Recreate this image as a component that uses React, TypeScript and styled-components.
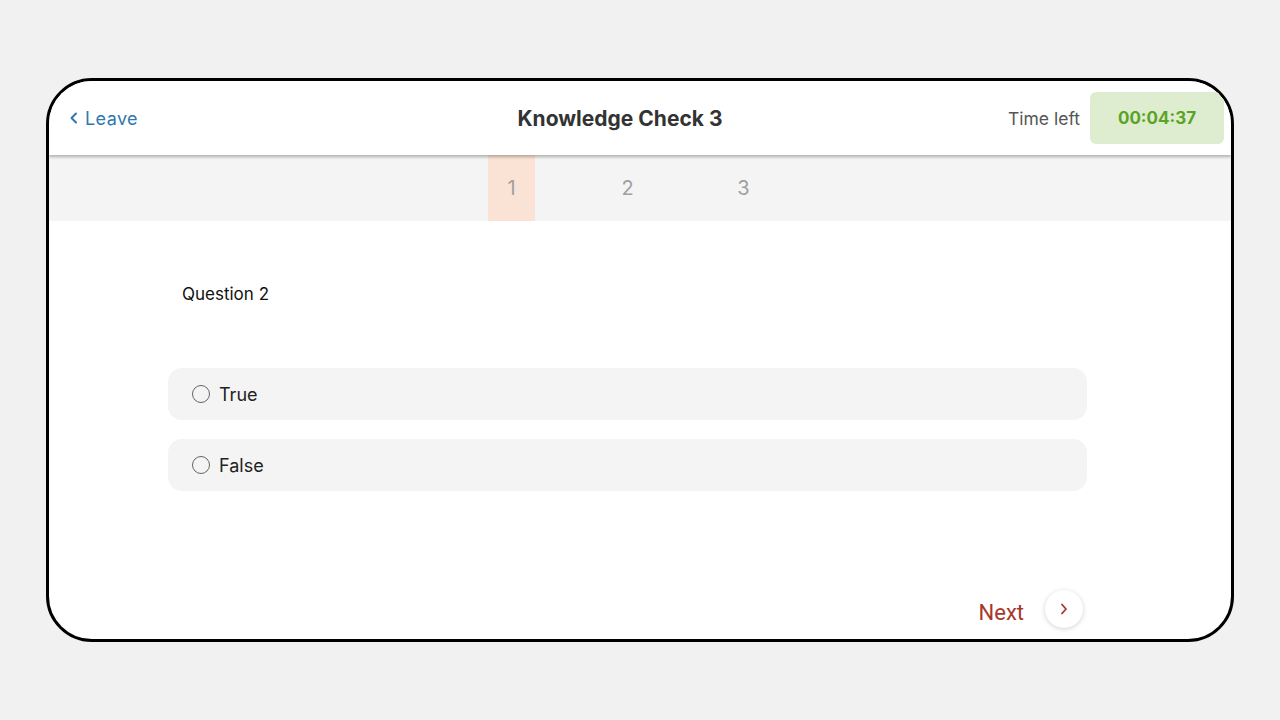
import React, { useState } from 'react'
import styled, { createGlobalStyle } from 'styled-components'

const GlobalStyle = createGlobalStyle`
  html, body {
    margin: 0;
    padding: 0;
    background: #f1f1f1;
    font-family: Inter, "Noto Sans", sans-serif;
  }
`

const questions = [1, 2, 3]
const options = ['True', 'False']

const App: React.FC = () => {
  const [current] = useState(1)
  const [selected, setSelected] = useState<string | null>(null)

  return (
    <>
      <GlobalStyle />
      <StyledPage>
        <StyledFrame>
          <StyledHeader>
            <StyledLeave>
              <svg width="10" height="12" viewBox="0 0 10 12">
                <path d="M7 1.5 L2.5 6 L7 10.5" fill="none" stroke="#2f78ad" strokeWidth="2" strokeLinecap="round" strokeLinejoin="round" />
              </svg>
              Leave
            </StyledLeave>
            <StyledTitle>Knowledge Check 3</StyledTitle>
            <StyledTimer>
              <StyledTimeLabel>Time left</StyledTimeLabel>
              <StyledTimeBadge>00:04:37</StyledTimeBadge>
            </StyledTimer>
          </StyledHeader>

          <StyledTabs>
            {questions.map((n) => (
              <StyledTab key={n} active={n === current}>{n}</StyledTab>
            ))}
          </StyledTabs>

          <StyledContent>
            <StyledQuestion>Question 2</StyledQuestion>
            <StyledOptions>
              {options.map((o) => (
                <StyledOption key={o} onClick={() => setSelected(o)}>
                  <StyledRadio checked={selected === o} />
                  {o}
                </StyledOption>
              ))}
            </StyledOptions>
          </StyledContent>

          <StyledFooter>
            <StyledNext>Next</StyledNext>
            <StyledNextButton>
              <svg width="10" height="12" viewBox="0 0 10 12">
                <path d="M3 1.5 L7 6 L3 10.5" fill="none" stroke="#a8362a" strokeWidth="1.8" strokeLinecap="round" strokeLinejoin="round" />
              </svg>
            </StyledNextButton>
          </StyledFooter>
        </StyledFrame>
      </StyledPage>
    </>
  )
}

const StyledPage = styled.div`
  width: 1280px;
  height: 720px;
  padding: 78px 0 0 46px;
  box-sizing: border-box;
`

const StyledFrame = styled.div`
  width: 1188px;
  height: 564px;
  box-sizing: border-box;
  border: 3px solid #000;
  border-radius: 46px;
  background: #fff;
  overflow: hidden;
  display: flex;
  flex-direction: column;
`

const StyledHeader = styled.div`
  position: relative;
  z-index: 1;
  height: 74px;
  flex-shrink: 0;
  display: flex;
  align-items: center;
  justify-content: space-between;
  padding: 0 7px 0 20px;
  background: #fff;
  box-shadow: 0 2px 3px rgba(0, 0, 0, 0.28);
`

const StyledLeave = styled.div`
  display: flex;
  align-items: center;
  gap: 6px;
  width: 300px;
  color: #2f78ad;
  font-size: 18px;
  letter-spacing: 0.4px;
`

const StyledTitle = styled.div`
  color: #333;
  font-size: 21px;
  font-weight: 700;
  margin-right: 53px;
`

const StyledTimer = styled.div`
  display: flex;
  align-items: center;
  justify-content: flex-end;
  gap: 10px;
  width: 300px;
`

const StyledTimeLabel = styled.span`
  color: #555;
  font-size: 17.5px;
`

const StyledTimeBadge = styled.div`
  width: 134px;
  height: 52px;
  border-radius: 6px;
  background: #deedd0;
  color: #5ba326;
  font-size: 17px;
  font-weight: 700;
  display: flex;
  align-items: center;
  justify-content: center;
`

const StyledTabs = styled.div`
  height: 66px;
  flex-shrink: 0;
  display: flex;
  gap: 69px;
  padding-left: 439px;
  background: #f4f4f4;
`

const StyledTab = styled.div<{ active?: boolean }>`
  width: 47px;
  display: flex;
  align-items: center;
  justify-content: center;
  color: #a0a0a0;
  font-size: 20px;
  background: ${(p) => (p.active ? '#fae3d5' : 'transparent')};
`

const StyledContent = styled.div`
  padding: 63px 0 0 119px;
  width: 919px;
`

const StyledQuestion = styled.div`
  padding-left: 14px;
  font-size: 17px;
  color: #111;
  line-height: 20px;
`

const StyledOptions = styled.div`
  margin-top: 64px;
  display: flex;
  flex-direction: column;
  gap: 19px;
`

const StyledOption = styled.div`
  height: 52px;
  border-radius: 14px;
  background: #f4f4f4;
  display: flex;
  align-items: center;
  gap: 9px;
  padding-left: 24px;
  color: #222;
  font-size: 18px;
  cursor: pointer;
`

const StyledRadio = styled.span<{ checked?: boolean }>`
  width: 18px;
  height: 18px;
  box-sizing: border-box;
  border-radius: 50%;
  border: 1.8px solid #666;
  background: ${(p) => (p.checked ? '#666' : 'transparent')};
  box-shadow: ${(p) => (p.checked ? 'inset 0 0 0 3px #f4f4f4' : 'none')};
`

const StyledFooter = styled.div`
  margin-top: auto;
  display: flex;
  align-items: center;
  justify-content: flex-end;
  gap: 21px;
  padding: 0 148px 11px 0;
`

const StyledNext = styled.span`
  font-family: Roboto, "Noto Sans", sans-serif;
  color: #a8362a;
  font-size: 22px;
  margin-top: 6px;
`

const StyledNextButton = styled.div`
  width: 38px;
  height: 38px;
  border-radius: 50%;
  background: #fff;
  box-shadow: 0 1px 5px rgba(0, 0, 0, 0.18);
  display: flex;
  align-items: center;
  justify-content: center;
`

export default App
